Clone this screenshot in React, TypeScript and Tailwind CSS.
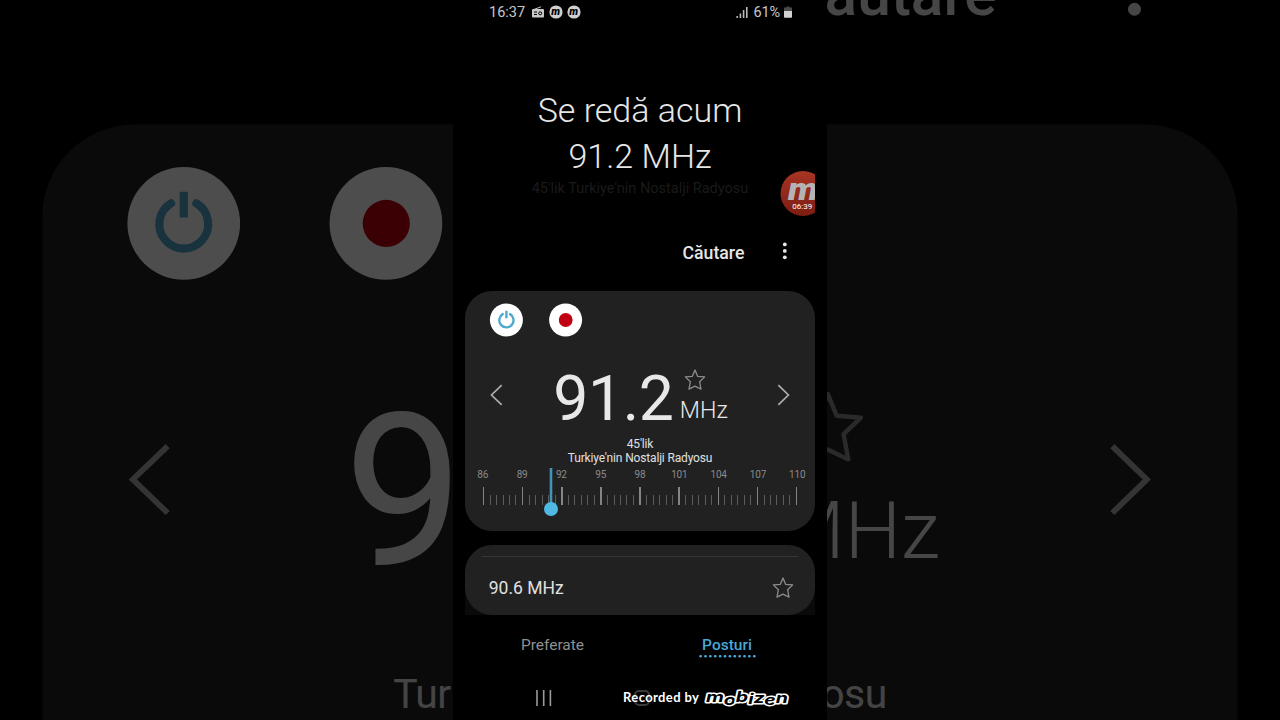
import React from 'react';

const stationLabels = [86, 89, 92, 95, 98, 101, 104, 107, 110];
const ticks = Array.from({ length: 49 }, (_, i) => i);

const StarIcon: React.FC = () => (
  <svg viewBox="0 0 24 24" className="w-6 h-6" fill="none" stroke="#8c8c8c" strokeWidth="1.3" strokeLinejoin="round">
    <path d="M12 2l2.6 6.3 7.1.6-5.1 4.8 1.4 7.4L12 18.2l-6 2.9 1.4-7.4L2.3 8.9l7.1-.6z" />
  </svg>
);

const MobizenDot: React.FC = () => (
  <svg viewBox="0 0 14 14" className="w-[14px] h-[14px]">
    <circle cx="7" cy="7" r="6.6" fill="#cfcfcf" />
    <text x="6.7" y="9.9" textAnchor="middle" fontSize="10.5" fontWeight="900" fontStyle="italic" fill="#000">m</text>
  </svg>
);

const StatusBar: React.FC = () => (
  <div className="h-6 pl-9 pr-[35px] flex items-center justify-between text-[14.5px] leading-none text-[#c8c8c8]">
    <div className="flex items-center">
      <span className="w-[43px] pt-[2px]">16:37</span>
      <svg viewBox="0 0 12 12" className="w-3 h-3 mr-[5px]">
        <path d="M1.5 3.6L9 .8" stroke="#c8c8c8" strokeWidth="1" />
        <rect x="0" y="3" width="12" height="8.5" rx="1" fill="#c8c8c8" />
        <path d="M2 6h3M2 8.5h3" stroke="#000" strokeWidth="1" />
        <circle cx="8.2" cy="7.3" r="1.5" fill="none" stroke="#000" strokeWidth="1" />
      </svg>
      <MobizenDot />
      <span className="w-[4.4px]" />
      <MobizenDot />
    </div>
    <div className="flex items-center">
      <svg viewBox="0 0 12 12" className="w-3 h-3 mr-[5px]" stroke="#b8b8b8" strokeWidth="1.6">
        <path d="M1.2 12V10M4.4 12V7.5M7.6 12V4M10.8 12V1" />
      </svg>
      <span className="pt-[2px] tracking-[-0.1px]">61%</span>
      <svg viewBox="0 0 8 12" className="w-2 h-3 ml-1">
        <path d="M2.5.5h3v1H8V6H0V1.5h2.5z" fill="#4a4a4a" />
        <path d="M0 5h8v6a.7.7 0 0 1-.7.7H.7A.7.7 0 0 1 0 11z" fill="#d2d2d2" />
      </svg>
    </div>
  </div>
);

const NowPlaying: React.FC = () => (
  <div className="h-[204px] pt-[63px] text-center text-[#e6e6e6]">
    <div className="text-[34px] leading-[46px] font-light">Se redă acum</div>
    <div className="text-[34px] leading-[46px] font-light">91.2 MHz</div>
    <div className="pt-px text-[14.5px] leading-[18px] text-[#1a1a1a]">45'lik Turkiye'nin Nostalji Radyosu</div>
  </div>
);

const Toolbar: React.FC = () => (
  <div className="h-[62.5px] pt-[12.5px] pl-[229.5px] flex items-start">
    <span className="w-[94px] text-[17.7px] leading-[24px] font-medium text-[#e6e6e6]">Căutare</span>
    <svg viewBox="0 0 16 20" className="w-4 h-5" fill="#e6e6e6">
      <circle cx="7.8" cy="3.4" r="1.9" />
      <circle cx="7.8" cy="9.9" r="1.9" />
      <circle cx="7.8" cy="16.3" r="1.9" />
    </svg>
  </div>
);

const Dial: React.FC = () => (
  <div className="relative mx-[17.5px] h-[50px]">
    <div className="-mx-[17.5px] flex justify-between">
      {stationLabels.map((label) => (
        <span key={label} className="w-[35px] text-center text-[10px] leading-[13px] tracking-[-0.2px] text-[#8a8a8a]">{label}</span>
      ))}
    </div>
    <div className="mt-[6px] h-[18px] flex justify-between items-end">
      {ticks.map((i) => (
        <span
          key={i}
          className={i % 6 === 0 ? 'w-[1.5px] h-[18px] bg-[#858585]' : 'w-px h-[10px] bg-[#5c5c5c]'}
        />
      ))}
    </div>
    <svg viewBox="0 0 14 50" className="absolute left-[61px] top-0 w-[14px] h-[50px]">
      <path d="M7 0v38" stroke="#4395b8" strokeWidth="2.6" />
      <circle cx="7" cy="41" r="7" fill="#4fb8e3" />
    </svg>
  </div>
);

interface TunerCardProps {
  showDial?: boolean;
}

const TunerCard: React.FC<TunerCardProps> = ({ showDial = true }) => (
  <div className="mx-[12.25px] h-[240px] bg-[#212121] rounded-[27px] overflow-hidden">
    <div className="h-[71.5px] pt-[13px] pl-[24.5px] flex items-start gap-[26px]">
      <button>
        <svg viewBox="0 0 33 33" className="w-[33px] h-[33px] overflow-visible" fill="none" stroke="#4fa9cd" strokeWidth="2.4" strokeLinecap="round">
          <circle cx="16.4" cy="16" r="16.5" fill="#fff" stroke="none" />
          <path d="M12.7 10.1a7.15 7.15 0 1 0 7.4 0" />
          <path d="M16.4 6.7v7.6" strokeLinecap="butt" />
        </svg>
      </button>
      <button>
        <svg viewBox="0 0 33 33" className="w-[33px] h-[33px] overflow-visible">
          <circle cx="16.6" cy="16" r="16.5" fill="#fff" />
          <circle cx="16.7" cy="16" r="6.9" fill="#c00010" />
        </svg>
      </button>
    </div>
    <div className="h-[66px] px-[24px] flex items-center justify-between">
      <svg viewBox="0 0 14 22" className="w-[14px] h-[22px]" fill="none" stroke="#adadad" strokeWidth="1.7">
        <path d="M12.7 1.2L2.5 11l10.2 9.8" />
      </svg>
      <div className="flex h-[66px] pl-[2px] text-[#e8e8e8]">
        <span className="text-[62.5px] leading-[73px] tracking-[-0.4px]">91.2</span>
        <span className="ml-[6.3px] w-[49px] flex flex-col">
          <span className="h-[31px] pt-[6px] pl-[3.5px]"><StarIcon /></span>
          <span className="text-[23.3px] leading-[37px] font-light">MHz</span>
        </span>
      </div>
      <svg viewBox="0 0 14 22" className="w-[14px] h-[22px]" fill="none" stroke="#adadad" strokeWidth="1.7">
        <path d="M1.3 1.2L11.4 11 1.3 20.8" />
      </svg>
    </div>
    <div className="h-[39.5px] pt-[10px] text-center text-[12px] leading-[13.5px] tracking-[-0.16px] text-[#e0e0e0]">
      {showDial && <div>45'lik</div>}
      <div className={showDial ? '' : 'mt-[13.5px]'}>Turkiye'nin Nostalji Radyosu</div>
    </div>
    {showDial && <Dial />}
  </div>
);

const StationList: React.FC = () => (
  <div className="mt-[14px] mx-[12.25px] bg-gradient-to-b from-black from-50% to-[#0a0a0a] to-50%">
    <div className="h-[70px] bg-[#212121] rounded-[27px] pt-[11px] px-[17px]">
      <div className="h-[1.5px] bg-[#363636]" />
      <div className="pt-[19px] pl-[6.5px] pr-[3px] flex items-center justify-between">
        <span className="text-[17.5px] leading-6 text-[#e0e0e0]">90.6 MHz</span>
        <StarIcon />
      </div>
    </div>
  </div>
);

const Tabs: React.FC = () => (
  <div className="h-[61.5px] pt-[20px] flex text-[15.5px] leading-5">
    <span className="w-[199px] text-center text-[#8f8f8f]">Preferate</span>
    <span className="w-[150px] flex flex-col items-center font-medium text-[#47a9d6]">
      Posturi
      <svg viewBox="0 0 57 3" className="w-[57px] h-[3px]" fill="#47a9d6">
        {ticks.slice(0, 12).map((i) => (
          <circle key={i} cx={1.6 + i * 4.88} cy="1.2" r="1.3" />
        ))}
      </svg>
    </span>
  </div>
);

const NavBar: React.FC = () => (
  <div className="h-[43px] pl-[83px] flex items-center">
    <svg viewBox="0 0 16 18" className="w-4 h-[18px]" stroke="#9a9a9a" strokeWidth="1.6">
      <path d="M1 1v16M7.7 1v16M14.4 1v16" />
    </svg>
    <span className="ml-[82px] w-[16px] h-[16px] rounded-[5px] border-2 border-[#3a3a3a]" />
    <span className="-ml-[27px] w-[80px] whitespace-nowrap font-[Lato,sans-serif] font-bold text-[13px] tracking-[0.38px] text-white">Recorded by</span>
    <svg viewBox="0 0 90 20" className="w-[90px] h-5 shrink-0" fontFamily="Inter" fontWeight="700" fontStyle="italic" fontSize="14.5">
      <g fill="#000" stroke="#fff" strokeWidth="2.8" strokeLinejoin="round" paintOrder="stroke">
        <text x="3" y="14" textLength="82" lengthAdjust="spacingAndGlyphs" dy="0 2.5 -2.5 2 -1 1.5 -2">mobizen</text>
      </g>
    </svg>
  </div>
);

const RecorderBadge: React.FC = () => (
  <div className="absolute left-[327px] top-[171px] w-[35px] h-[45px] overflow-hidden">
    <svg viewBox="0 0 35 45" className="w-[35px] h-[45px]" fontFamily="Roboto">
      <defs>
        <linearGradient id="badge" x1="0" y1="0" x2="0" y2="1">
          <stop offset="0" stopColor="#a83524" />
          <stop offset="1" stopColor="#7c1c12" />
        </linearGradient>
      </defs>
      <circle cx="23" cy="22.5" r="22.5" fill="url(#badge)" />
      <text x="8" y="28.5" fontSize="31" fontWeight="900" fontStyle="italic" fill="#b4b4b4" textLength="30" lengthAdjust="spacingAndGlyphs">m</text>
      <text x="12.3" y="38" fontSize="8" fill="#fff">06:39</text>
    </svg>
  </div>
);

const App: React.FC = () => {
  return (
    <div className="relative w-[1280px] h-[720px] bg-black overflow-hidden flex justify-center font-[Roboto,sans-serif]">
      {/* dimmed enlargement of the tuner fills the sides */}
      <div
        className="absolute left-[453px] top-0 w-[374px] h-[720px] pt-[228px] opacity-30 scale-[3.415]"
        aria-hidden="true"
      >
        <Toolbar />
        <TunerCard showDial={false} />
      </div>
      <div className="relative w-[374px] h-[720px] bg-black overflow-hidden">
        <StatusBar />
        <NowPlaying />
        <Toolbar />
        <TunerCard />
        <StationList />
        <Tabs />
        <NavBar />
        <RecorderBadge />
      </div>
    </div>
  );
};

export default App;
